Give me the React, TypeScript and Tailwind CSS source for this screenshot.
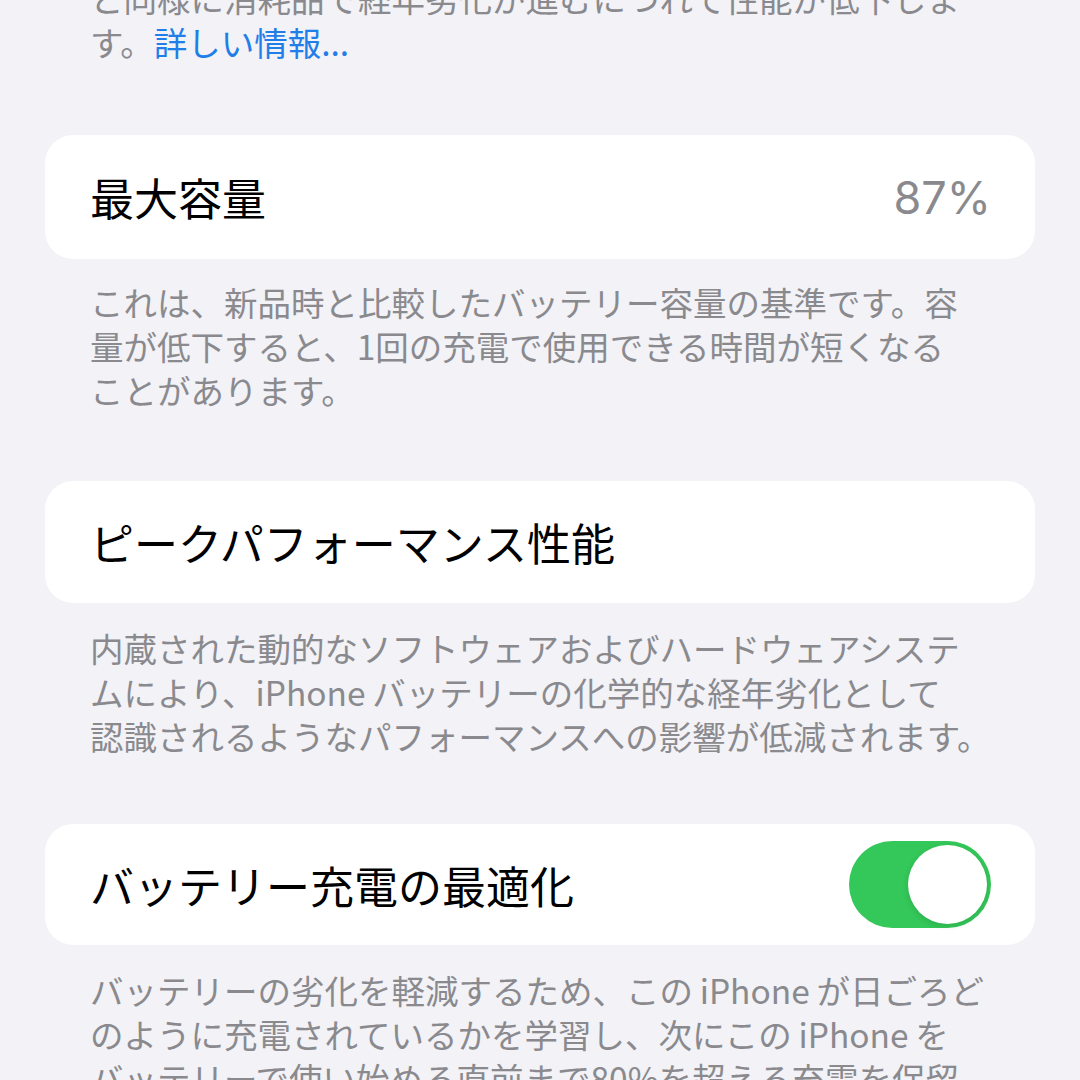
const CJK = "font-['Noto_Sans_CJK_JP','Noto_Sans',sans-serif]";

function Toggle() {
  return (
    <div className="flex h-[87px] w-[142px] items-center justify-end rounded-full bg-[#34c759] p-[4px]">
      <div className="h-[79px] w-[79px] rounded-full bg-white shadow-[0_2px_6px_rgba(0,0,0,0.12)]" />
    </div>
  );
}

function Card({
  title,
  className = '',
  children,
}: {
  title: string;
  className?: string;
  children?: React.ReactNode;
}) {
  return (
    <div
      className={`flex items-center justify-between rounded-[28px] bg-white pl-[45px] pr-[44px] ${className}`}
    >
      <span className="text-[44px] leading-none text-black">{title}</span>
      {children}
    </div>
  );
}

function Note({ lines, className = '' }: { lines: string[]; className?: string }) {
  return (
    <p className={`px-[45px] text-[33.5px] leading-[44px] text-[#8a8a8e] ${className}`}>
      {lines.map((line, i) => (
        <span key={i} className="block whitespace-nowrap">
          {line}
        </span>
      ))}
    </p>
  );
}

export default function App() {
  return (
    <div className={`h-[1080px] w-[1080px] overflow-hidden bg-[#f2f2f7] px-[45px] ${CJK}`}>
      <p className="-mt-[24px] px-[45px] text-[33.5px] leading-[44px] text-[#8a8a8e]">
        <span className="block whitespace-nowrap">と同様に消耗品で経年劣化が進むにつれて性能が低下しま</span>
        <span className="block whitespace-nowrap">
          す。<span className="text-[#1f7ee8]">詳しい情報...</span>
        </span>
      </p>

      <Card title="最大容量" className="mt-[71px] h-[124px]">
        <span className="font-['Inter',sans-serif] text-[45px] leading-none text-[#8a8a8e]">87%</span>
      </Card>
      <Note
        className="mt-[21px]"
        lines={[
          'これは、新品時と比較したバッテリー容量の基準です。容',
          '量が低下すると、1回の充電で使用できる時間が短くなる',
          'ことがあります。',
        ]}
      />

      <Card title="ピークパフォーマンス性能" className="mt-[69px] h-[122px]" />
      <Note
        className="mt-[23px]"
        lines={[
          '内蔵された動的なソフトウェアおよびハードウェアシステ',
          'ムにより、iPhone\u2009バッテリーの化学的な経年劣化として',
          '認識されるようなパフォーマンスへの影響が低減されます。',
        ]}
      />

      <Card title="バッテリー充電の最適化" className="mt-[66px] h-[121px]">
        <Toggle />
      </Card>
      <Note
        className="mt-[23px]"
        lines={[
          'バッテリーの劣化を軽減するため、この\u2009iPhone\u2009が日ごろど',
          'のように充電されているかを学習し、次にこの\u2009iPhone\u2009を',
          'バッテリーで使い始める直前まで80%を超える充電を保留',
        ]}
      />
    </div>
  );
}
